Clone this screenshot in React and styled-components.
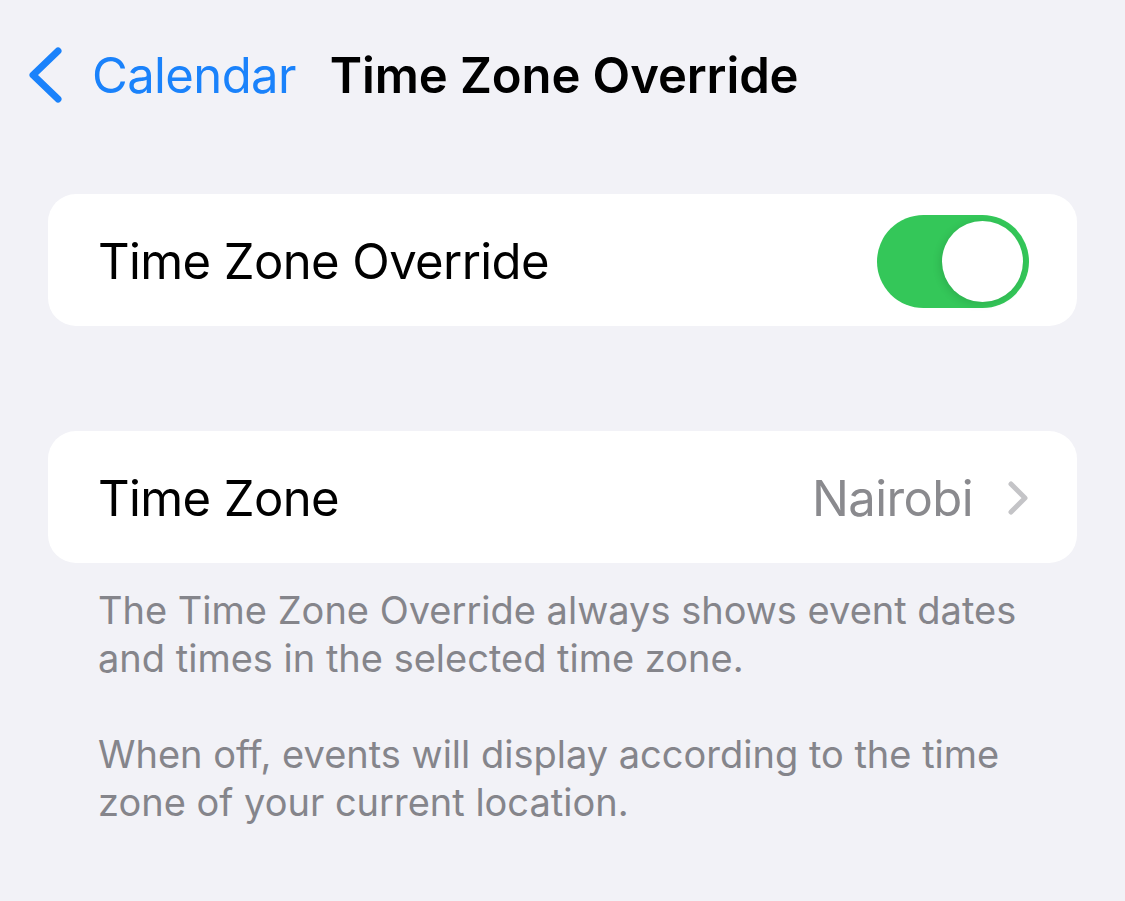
import React from "react"
import styled, { createGlobalStyle } from "styled-components"

const GlobalStyle = createGlobalStyle`
  html, body {
    margin: 0;
    padding: 0;
    background: #f2f2f7;
  }
  body {
    font-family: Inter, "Noto Sans", sans-serif;
    -webkit-font-smoothing: antialiased;
  }
`

const Page = styled.div`
  width: 1125px;
  min-height: 901px;
  background: #f2f2f7;
  display: flex;
  flex-direction: column;
`

const NavBar = styled.div`
  display: flex;
  align-items: center;
  height: 150px;
  padding: 0 0 0 26px;
  box-sizing: border-box;
`

const BackButton = styled.div`
  display: flex;
  align-items: center;
  gap: 28px;
  color: #1a82fb;
  font-size: 49px;
  letter-spacing: -0.6px;
  margin-right: 34px;
`

const NavTitle = styled.div`
  font-size: 49px;
  font-weight: 600;
  color: #000;
  letter-spacing: -0.1px;
`

const Group = styled.div`
  margin: ${({ $top }) => $top}px 48px 0;
  background: #fff;
  border-radius: 28px;
`

const Row = styled.div`
  height: 132px;
  display: flex;
  align-items: center;
  justify-content: space-between;
  padding: 2px 48px 0 50px;
  box-sizing: border-box;
`

const Label = styled.div`
  font-size: 49px;
  color: #000;
  letter-spacing: -0.6px;
`

const Detail = styled.div`
  display: flex;
  align-items: center;
  gap: 34px;
  color: #8a8a8e;
  font-size: 49px;
  letter-spacing: -0.6px;
`

const Switch = styled.div`
  width: 152px;
  height: 93px;
  border-radius: 47px;
  background: ${({ $on }) => ($on ? "#34c759" : "#e9e9ea")};
  display: flex;
  align-items: center;
  justify-content: ${({ $on }) => ($on ? "flex-end" : "flex-start")};
  padding: 0 6px;
  box-sizing: border-box;
`

const Knob = styled.div`
  width: 81px;
  height: 81px;
  border-radius: 50%;
  background: #fff;
  box-shadow: -2px 2px 8px rgba(0, 0, 0, 0.12);
`

const Footer = styled.div`
  padding: 23px 40px 0 98px;
  display: flex;
  flex-direction: column;
  gap: 48px;
`

const Note = styled.p`
  margin: 0;
  font-size: 38px;
  line-height: 48px;
  color: #85858b;
  letter-spacing: 0;
`

const BackChevron = () => (
  <svg width="38" height="56" viewBox="0 0 38 56">
    <path
      d="M32 4 L7 28 L32 52"
      fill="none"
      stroke="#1a82fb"
      strokeWidth="7"
      strokeLinecap="round"
      strokeLinejoin="round"
    />
  </svg>
)

const Disclosure = () => (
  <svg width="22" height="34" viewBox="0 0 22 34">
    <path
      d="M4 3 L18 17 L4 31"
      fill="none"
      stroke="#c4c4c7"
      strokeWidth="5"
      strokeLinecap="round"
      strokeLinejoin="round"
    />
  </svg>
)

export default function App() {
  return (
    <>
      <GlobalStyle />
      <Page>
        <NavBar>
          <BackButton>
            <BackChevron />
            Calendar
          </BackButton>
          <NavTitle>Time Zone Override</NavTitle>
        </NavBar>

        <Group $top={44}>
          <Row>
            <Label>Time Zone Override</Label>
            <Switch $on>
              <Knob />
            </Switch>
          </Row>
        </Group>

        <Group $top={105}>
          <Row>
            <Label>Time Zone</Label>
            <Detail>
              Nairobi
              <Disclosure />
            </Detail>
          </Row>
        </Group>

        <Footer>
          <Note>
            The Time Zone Override always shows event dates
            <br />
            and times in the selected time zone.
          </Note>
          <Note>
            When off, events will display according to the time
            <br />
            zone of your current location.
          </Note>
        </Footer>
      </Page>
    </>
  )
}
